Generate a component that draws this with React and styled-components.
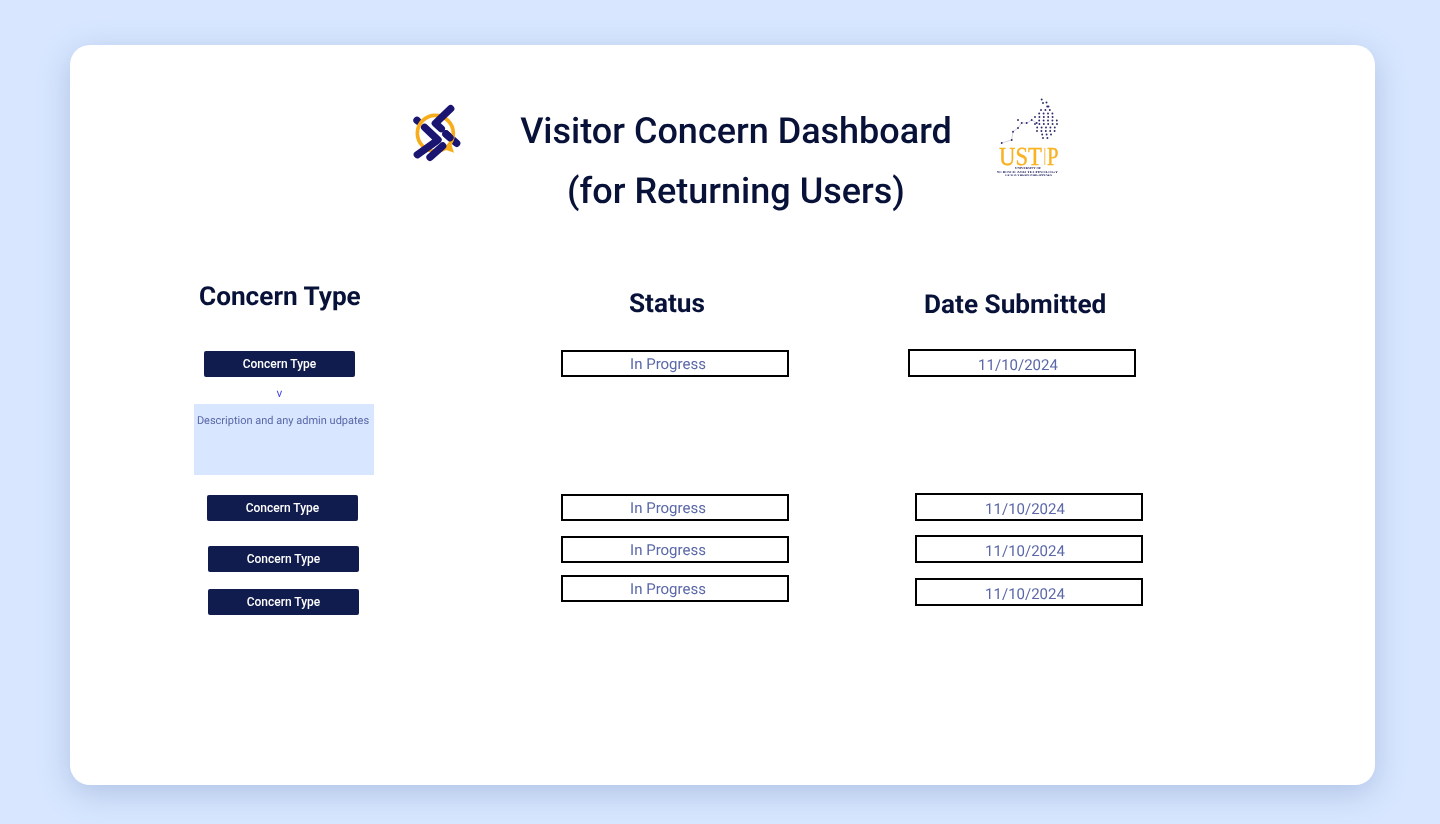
import styled, { createGlobalStyle } from "styled-components";

const GlobalStyle = createGlobalStyle`
  html, body {
    margin: 0;
    padding: 0;
    background: #d8e7ff;
    font-family: Roboto, "Liberation Sans", sans-serif;
    text-rendering: geometricPrecision;
  }
`;

const Page = styled.div`
  box-sizing: border-box;
  height: 824px;
  padding: 45px 65px 39px 70px;
  overflow: hidden;
`;

const Card = styled.main`
  box-sizing: border-box;
  height: 740px;
  padding: 46px 0 0 124px;
  background: #fff;
  border-radius: 20px;
  box-shadow: 0 8px 32px rgba(70, 100, 160, 0.28);
  will-change: transform;
`;

const Header = styled.header`
  display: flex;
  align-items: flex-start;
  height: 195px;
`;

const Title = styled.h1`
  width: 480px;
  margin: 10px 0 0 16px;
  font-size: 36px;
  line-height: 60px;
  font-weight: 500;
  text-align: center;
  color: #081238;
`;

const LogoMark = styled.svg`
  flex: none;
  width: 80px;
  height: 80px;
  margin: -1px 0 0 206px;
`;

const SchoolMark = styled.svg`
  flex: none;
  width: 85px;
  height: 90px;
  margin: -1px 0 0 9px;
`;

const Columns = styled.div`
  display: flex;
  align-items: flex-start;
`;

const Column = styled.section`
  display: flex;
  flex-direction: column;
  flex: none;
  width: ${(p) => p.$width}px;
  align-items: flex-start;
`;

const Heading = styled.h2`
  margin: ${(p) => p.$top}px 0 ${(p) => p.$bottom}px ${(p) => p.$left}px;
  height: 30px;
  font-size: 26.2px;
  line-height: 30px;
  font-weight: 700;
  white-space: nowrap;
  color: #081238;
`;

const TypeButton = styled.button`
  box-sizing: border-box;
  width: 151px;
  height: 26px;
  margin: ${(p) => p.$top}px 0 0 ${(p) => p.$left}px;
  padding: 0;
  border: 0;
  border-radius: 2px;
  background: #111c4e;
  color: #fff;
  font: 500 12px/26px Roboto, sans-serif;
  text-align: center;
`;

const Toggle = styled.div`
  width: 151px;
  margin: 9px 0 0 10px;
  height: 18px;
  font-size: 12px;
  line-height: 14px;
  text-align: center;
  color: #4a4ae0;
`;

const Description = styled.div`
  box-sizing: border-box;
  width: 180px;
  height: 71px;
  padding: 10px 2px 0 0;
  background: #d8e7ff;
  font-size: 11px;
  line-height: 14px;
  text-align: center;
  color: #5a67a8;
`;

const ValueBox = styled.div`
  box-sizing: border-box;
  width: 228px;
  height: ${(p) => p.$height}px;
  margin: ${(p) => p.$top}px 0 0 ${(p) => p.$left}px;
  padding-right: ${(p) => p.$inset}px;
  border: 2px solid #000;
  background: #fff;
  font-size: 15px;
  line-height: ${(p) => p.$line}px;
  text-align: center;
  color: #5a67a8;
`;

// outline of the dotted wedge in the school mark: [y, left x, right x]
const wedge = [
  [13, 58, 60], [16.5, 60, 64], [20, 56, 67], [23.5, 52, 69], [27, 50, 71], [30.5, 52, 72],
  [34, 50, 73], [37.5, 50, 73], [41, 52, 73], [44.5, 55, 69], [48, 58, 64],
];
const lattice = [];
wedge.forEach(([y, from, to], r) => {
  for (let x = from + (r % 2) * 2.2; x <= to; x += 4.4) lattice.push([x, y]);
});

const trail = [
  [16.7, 53], [26.7, 50], [28, 41.7], [33, 38], [36.7, 33], [41.7, 33], [46.7, 30], [51.7, 33],
];
const trailTop = [
  [56.7, 9.5], [61.5, 12.5], [63.5, 16.5],
];

function AppLogo() {
  return (
    <LogoMark viewBox="0 0 240 240" aria-label="logo">
      <g fill="none" stroke="#1a1570" strokeWidth="22" strokeLinecap="round" strokeLinejoin="round">
        <path d="M51 91 L53 93" />
        <path d="M138 132 L170 160" />
      </g>
      <circle cx="106" cy="130" r="54" fill="none" stroke="#f8ad1c" strokeWidth="11" />
      <path d="M132 178 L162 188 L152 156 Z" fill="#f8ad1c" />
      <g fill="none" stroke="#1a1570" strokeWidth="22" strokeLinecap="round" strokeLinejoin="round">
        <path d="M74 112 L114 150 L52 194" />
        <path d="M152 56 L106 100 L124 116" />
        <path d="M138 132 L150 143" />
        <path d="M128 168 L90 202" />
      </g>
    </LogoMark>
  );
}

function SchoolLogo() {
  return (
    <SchoolMark viewBox="0 0 85 90" aria-label="USTP">
      <polyline
        points={trail.map((p) => p.join(",")).join(" ")}
        fill="none"
        stroke="#8f8fb5"
        strokeWidth="0.4"
      />
      <g fill="#2b2a6b">
        {lattice.concat(trail, trailTop, [[33, 30]]).map(([x, y], i) => (
          <circle key={i} cx={x} cy={y} r="0.95" />
        ))}
      </g>
      <g fontFamily="Liberation Serif" fontSize="26" fill="#f8b223" stroke="#f8b223" strokeWidth="0.4">
        <text x="14" y="75" textLength="43" lengthAdjust="spacingAndGlyphs">UST</text>
        <text x="62" y="75" textLength="11.5" lengthAdjust="spacingAndGlyphs">P</text>
      </g>
      <rect x="59" y="58" width="1.4" height="17" fill="#f8cf80" />
      <g fontFamily="Liberation Serif" fontWeight="700" fill="#1f2060">
        <text x="30" y="79" fontSize="3" textLength="26" lengthAdjust="spacingAndGlyphs">UNIVERSITY OF</text>
        <text x="12" y="82.5" fontSize="3.2" textLength="61" lengthAdjust="spacingAndGlyphs">SCIENCE AND TECHNOLOGY</text>
        <text x="20" y="86" fontSize="2.8" textLength="47" lengthAdjust="spacingAndGlyphs">OF SOUTHERN PHILIPPINES</text>
      </g>
    </SchoolMark>
  );
}

const typeRows = [
  { top: 20, left: 13 },
  { top: 25, left: 14 },
  { top: 17, left: 14 },
];
const statusRows = [
  { top: 0, left: 0 },
  { top: 117, left: 0 },
  { top: 15, left: 0 },
  { top: 12, left: 0 },
];
const dateRows = [
  { top: 0, left: 0 },
  { top: 116, left: 7 },
  { top: 14, left: 7 },
  { top: 15, left: 7 },
];

export default function App() {
  return (
    <Page>
      <GlobalStyle />
      <Card>
        <Header>
          <AppLogo />
          <Title>Visitor Concern Dashboard (for Returning Users)</Title>
          <SchoolLogo />
        </Header>
        <Columns>
          <Column $width={367}>
            <Heading $top={-4} $bottom={39} $left={5}>Concern Type</Heading>
            <TypeButton $top={0} $left={10}>Concern Type</TypeButton>
            <Toggle>v</Toggle>
            <Description>Description and any admin udpates</Description>
            {typeRows.map((r, i) => (
              <TypeButton key={i} $top={r.top} $left={r.left}>Concern Type</TypeButton>
            ))}
          </Column>
          <Column $width={347}>
            <Heading $top={3} $bottom={31} $left={68}>Status</Heading>
            {statusRows.map((r, i) => (
              <ValueBox key={i} $height={27} $line={25} $top={r.top} $left={r.left} $inset={14}>In Progress</ValueBox>
            ))}
          </Column>
          <Column $width={240}>
            <Heading $top={4} $bottom={29} $left={16}>Date Submitted</Heading>
            {dateRows.map((r, i) => (
              <ValueBox key={i} $height={28} $line={28} $top={r.top} $left={r.left} $inset={8}>11/10/2024</ValueBox>
            ))}
          </Column>
        </Columns>
      </Card>
    </Page>
  );
}
